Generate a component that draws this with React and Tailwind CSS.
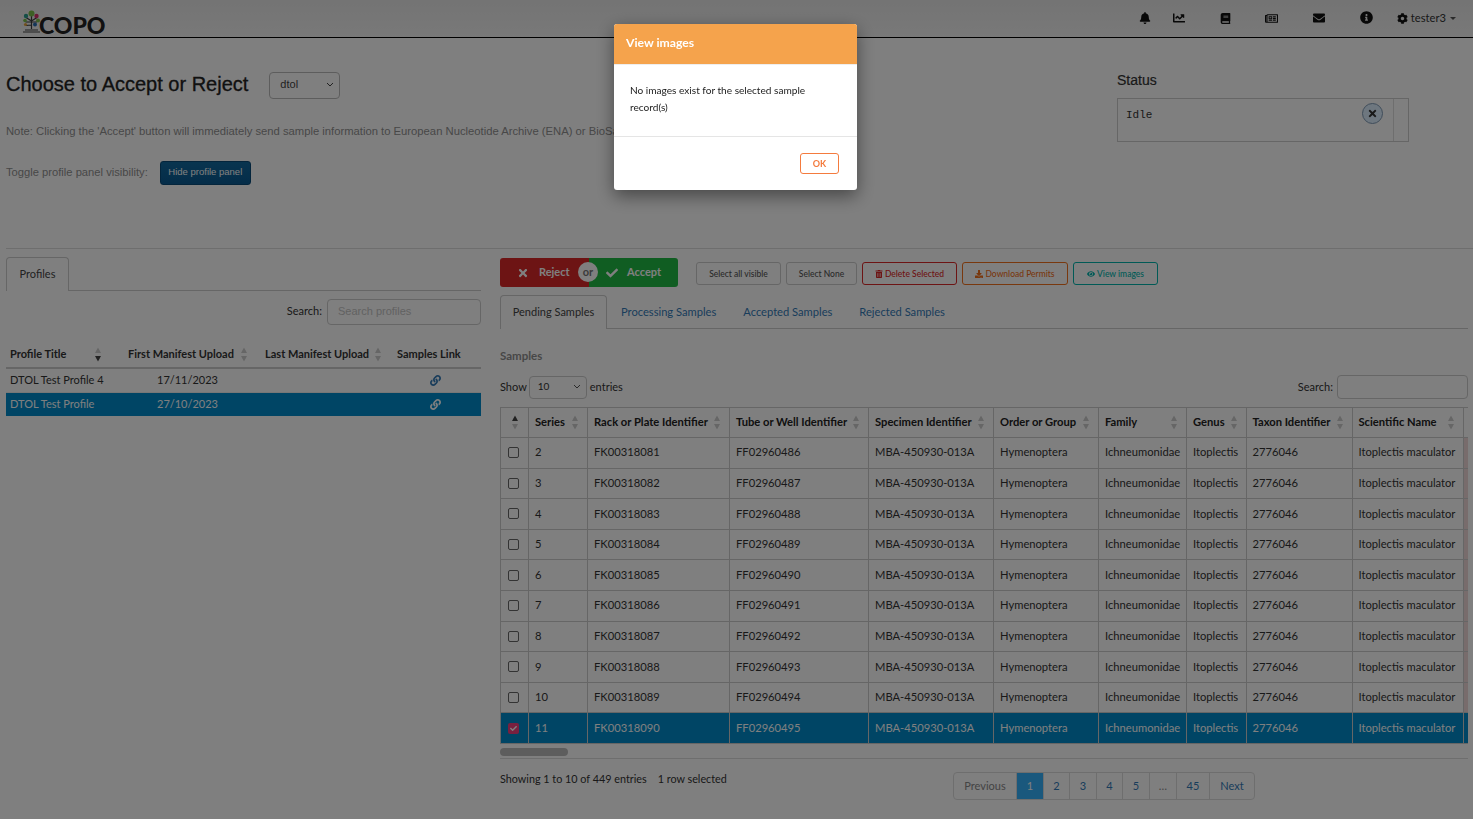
import {
  FaBell,
  FaChartLine,
  FaBook,
  FaRegNewspaper,
  FaEnvelope,
  FaInfoCircle,
  FaCog,
  FaLink,
  FaTimes,
  FaCheck,
  FaTrashAlt,
  FaDownload,
  FaEye,
} from "react-icons/fa";

const lato = "font-['Lato','Liberation_Sans',sans-serif]";

const sampleCols = [
  { label: "Series", w: 59, key: "series" },
  { label: "Rack or Plate Identifier", w: 142, key: "rack" },
  { label: "Tube or Well Identifier", w: 139, key: "tube" },
  { label: "Specimen Identifier", w: 125, key: "spec" },
  { label: "Order or Group", w: 105, key: "order" },
  { label: "Family", w: 88, key: "family" },
  { label: "Genus", w: 59.5, key: "genus" },
  { label: "Taxon Identifier", w: 106, key: "taxon" },
  { label: "Scientific Name", w: 111, key: "name" },
];

const rows = Array.from({ length: 10 }, (_, i) => ({
  series: i + 2,
  rack: `FK0031${8081 + i}`,
  tube: `FF0${2960486 + i}`,
  spec: "MBA-450930-013A",
  order: "Hymenoptera",
  family: "Ichneumonidae",
  genus: "Itoplectis",
  taxon: "2776046",
  name: "Itoplectis maculator",
  selected: i === 9,
}));

function SortArrows({ active }) {
  return (
    <svg width="8" height="15" viewBox="0 0 8 15" className="shrink-0">
      <path d="M4 0.5 L7 6 L1 6 Z" fill={active === "up" ? "#444" : "#ccc"} />
      <path d="M4 14.5 L7 9 L1 9 Z" fill={active === "down" ? "#444" : "#ccc"} />
    </svg>
  );
}

function Logo() {
  return (
    <div className="flex items-end ml-[22px] mb-[1px]">
      <svg width="19" height="23" viewBox="0 0 19 23" className="mb-[3px]">
        <path d="M9.5 5 V19 M4 7.5 L9.5 11 M15 7.5 L9.5 11 M3.5 12 H15 M4 15.5 L9.5 15" stroke="#3d3d3d" strokeWidth="1.2" fill="none" />
        <path d="M1 22 H18 M3 20 H16" stroke="#444" strokeWidth="1" />
        <circle cx="9.5" cy="3.5" r="3" fill="#7cc04a" />
        <circle cx="4" cy="6" r="2.2" fill="#2a9d8f" />
        <circle cx="14.5" cy="6" r="2.2" fill="#d6336c" />
        <circle cx="3" cy="10.5" r="1.8" fill="#7cc04a" />
        <circle cx="16" cy="10.5" r="2" fill="#7cc04a" />
        <circle cx="3.5" cy="14.5" r="1.6" fill="#e0a03c" />
        <circle cx="13" cy="14.5" r="2" fill="#2b6cb0" />
      </svg>
      <span className={`${lato} -ml-[2px] text-[23px] leading-[22px] font-black text-[#222]`}>COPO</span>
    </div>
  );
}

function Navbar() {
  return (
    <nav className="h-[38px] flex items-end justify-between border-b border-black bg-gradient-to-b from-[#e8e8e8] to-[#f2f2f2]">
      <Logo />
      <div className="flex items-center h-[37px] pr-[17px] pb-[1px] text-[#111] text-[12px]">
        <FaBell className="text-[12px]" />
        <FaChartLine className="text-[12px] ml-[22px]" />
        <FaBook className="text-[11px] ml-[35px]" />
        <FaRegNewspaper className="text-[13px] ml-[34px]" />
        <FaEnvelope className="text-[12px] ml-[35px]" />
        <FaInfoCircle className="text-[13px] ml-[35px] mb-[2px]" />
        <FaCog className="text-[11px] ml-[24px]" />
        <span className={`${lato} text-[#333] text-[11.2px] ml-[3px]`}>tester3</span>
        <span className="ml-[4px] border-x-[3px] border-t-[3px] border-x-transparent border-t-[#555]" />
      </div>
    </nav>
  );
}

function TopPanel() {
  return (
    <section className="h-[211px] ml-[6px] border-b border-[#ddd] flex font-['Liberation_Sans',sans-serif]">
      <div className="flex-1 min-w-0 pt-[34px]">
        <div className="flex items-center h-[27px]">
          <h1 className="mb-[4px] text-[20px] font-medium text-[#222] [-webkit-text-stroke:0.3px_#222]">Choose to Accept or Reject</h1>
          <div className="ml-[21px] w-[71px] h-[27px] border border-[#bbb] rounded-[4px] flex items-center justify-between pl-[10px] pr-[5px] pb-[2px] text-[11px] text-[#444]">
            dtol
            <svg width="8" height="5" viewBox="0 0 8 5"><path d="M1 1 L4 4 L7 1" stroke="#444" fill="none" /></svg>
          </div>
        </div>
        <p className="mt-[23px] text-[11.25px] leading-[18px] text-[#909090] whitespace-nowrap">
          Note: Clicking the 'Accept' button will immediately send sample information to European Nucleotide Archive (ENA) or BioSamples.
        </p>
        <div className="mt-[21px] flex items-center h-[24px]">
          <span className="text-[11.2px] pb-[2px] text-[#909090]">Toggle profile panel visibility:</span>
          <button className="ml-[12px] w-[91px] h-[24px] pb-[2px] rounded-[3px] bg-gradient-to-b from-[#11699f] to-[#0a5a92] border border-[#084a78] text-white text-[9.5px]">
            Hide profile panel
          </button>
        </div>
      </div>
      <div className="w-[292px] mr-[64px] pt-[34px]">
        <h2 className="text-[14px] leading-[16px] font-medium text-[#333] [-webkit-text-stroke:0.2px_#333]">Status</h2>
        <div className="mt-[10px] h-[44px] border border-[#ccc] flex font-['Liberation_Mono',monospace]">
          <div className="flex-1 relative pl-[8px] pt-[10px] text-[11px] leading-[13px] text-[#333]">
            Idle
            <span className="absolute right-[10px] top-[4px] w-[21px] h-[21px] rounded-full border border-[#7f9ab4] bg-[#dceeff] flex items-center justify-center text-[#333]">
              <FaTimes className="text-[11px]" />
            </span>
          </div>
          <div className="w-[15px] border-l border-[#ddd]" />
        </div>
      </div>
    </section>
  );
}

function ProfilesPanel() {
  const heads = [
    { label: "Profile Title", w: 118, arrow: "down", pad: "pl-[4px] pr-[22px]" },
    { label: "First Manifest Upload", w: 137, pad: "pl-[4px] pr-[13px]" },
    { label: "Last Manifest Upload", w: 132, pad: "pl-[4px] pr-[11px]" },
    { label: "Samples Link", w: 88, pad: "pl-[4px]", noSort: true },
  ];
  const profiles = [
    { title: "DTOL Test Profile 4", date: "17/11/2023" },
    { title: "DTOL Test Profile", date: "27/10/2023", selected: true },
  ];
  return (
    <div className={`w-[475px] shrink-0 pt-[8px] ${lato} text-[11px] text-[#333]`}>
      <div className="h-[34px] border-b border-[#ccc]">
        <div className="w-[63px] h-[34px] pb-[1px] border border-b-0 border-[#ccc] rounded-t-[4px] bg-[#fff] flex items-center justify-center text-[#444]">
          Profiles
        </div>
      </div>
      <div className="mt-[8px] h-[26px] flex items-center justify-end">
        <span className="pb-[2px]">Search:</span>
        <div className="ml-[5px] w-[154px] h-[26px] pb-[2px] border border-[#ccc] rounded-[4px] pl-[10px] flex items-center text-[#c4c4c4] font-['Liberation_Sans',sans-serif] text-[11px]">
          Search profiles
        </div>
      </div>
      <table className="mt-[17px] w-[475px] table-fixed border-collapse">
        <colgroup>
          {heads.map((h) => (
            <col key={h.label} style={{ width: h.w }} />
          ))}
        </colgroup>
        <thead>
          <tr className="h-[26px] border-b-2 border-[#ccc]">
            {heads.map((h) => (
              <th key={h.label} className={`${h.pad} p-0 text-left font-bold whitespace-nowrap`}>
                <div className="flex items-center justify-between">
                  {h.label}
                  {!h.noSort && <SortArrows active={h.arrow} />}
                </div>
              </th>
            ))}
          </tr>
        </thead>
        <tbody>
          {profiles.map((p) => (
            <tr key={p.title} className={`h-[24px] ${p.selected ? "bg-[#008bcb] text-white" : "border-b border-[#eee]"}`}>
              <td className="pl-[4px]">{p.title}</td>
              <td className="pl-[33px]">{p.date}</td>
              <td />
              <td className="pl-[37px]">
                <FaLink className={`text-[11px] ${p.selected ? "text-white" : "text-[#337ab7]"}`} />
              </td>
            </tr>
          ))}
        </tbody>
      </table>
    </div>
  );
}

function ActionButtons() {
  const small = "h-[23px] pt-[1px] rounded-[3px] border flex items-center justify-center text-[8.5px] font-medium";
  return (
    <div className="h-[29px] flex items-center">
      <div className="relative flex w-[178px] h-[29px] pt-0 text-white text-[11px] font-bold">
        <div className="w-[89px] bg-[#db2828] rounded-l-[3px] flex items-center pl-[17px]">
          <FaTimes className="text-[12px]" />
          <span className="ml-[10px]">Reject</span>
        </div>
        <div className="w-[89px] bg-[#21ba45] rounded-r-[3px] flex items-center pl-[17px]">
          <FaCheck className="text-[12px]" />
          <span className="ml-[9px]">Accept</span>
        </div>
        <span className="absolute left-[78px] top-[4px] w-[20px] h-[20px] rounded-full bg-white text-[#777] flex items-center justify-center text-[11px]">or</span>
      </div>
      <div className="ml-[18px] mt-[2px] flex gap-[5px]">
        <div className={`${small} w-[85px] border-[#ccc] text-[#555]`}>Select all visible</div>
        <div className={`${small} w-[71px] border-[#ccc] text-[#555]`}>Select None</div>
        <div className={`${small} w-[95px] border-[#db2828] text-[#db2828]`}>
          <FaTrashAlt className="text-[8px] mr-[2px]" />Delete Selected
        </div>
        <div className={`${small} w-[106px] border-[#f2711c] text-[#f2711c]`}>
          <FaDownload className="text-[8px] mr-[2px]" />Download Permits
        </div>
        <div className={`${small} w-[85px] border-[#00b5ad] text-[#00b5ad]`}>
          <FaEye className="text-[8px] mr-[2px]" />View images
        </div>
      </div>
    </div>
  );
}

function SampleTabs() {
  return (
    <div className="mt-[8px] h-[34px] border-b border-[#ccc] flex text-[11.15px]">
      <div className="w-[107px] h-[34px] pb-[1px] border border-b-0 border-[#ccc] rounded-t-[4px] bg-white flex items-center justify-center text-[11px] text-[#444]">
        Pending Samples
      </div>
      <span className="ml-[14px] mt-[9px] text-[#337ab7]">Processing Samples</span>
      <span className="ml-[27px] mt-[9px] text-[#337ab7]">Accepted Samples</span>
      <span className="ml-[27px] mt-[9px] text-[#337ab7]">Rejected Samples</span>
    </div>
  );
}

function Checkbox({ checked }) {
  return checked ? (
    <span className="block w-[11px] h-[11px] ml-[7px] rounded-[2px] bg-[#f0407f] flex items-center justify-center text-white">
      <FaCheck className="text-[7px]" />
    </span>
  ) : (
    <span className="block w-[11px] h-[11px] ml-[7px] rounded-[2px] border border-[#666] bg-[#fff]" />
  );
}

function SamplesTable() {
  return (
    <div className="mt-[8px] overflow-hidden w-[968px]">
      <table className="table-fixed border-collapse w-[975px] border-l border-[#ccc]">
        <colgroup>
          <col style={{ width: 28 }} />
          {sampleCols.map((c) => (
            <col key={c.key} style={{ width: c.w }} />
          ))}
          <col style={{ width: 12 }} />
        </colgroup>
        <thead>
          <tr className="h-[30px] border-y border-[#ccc] text-[#222]">
            <th className="border-r border-[#ccc]">
              <div className="flex justify-center">
                <SortArrows active="up" />
              </div>
            </th>
            {sampleCols.map((c) => (
              <th key={c.key} className="border-r border-[#ccc] pl-[6px] pr-[8px] text-left font-bold whitespace-nowrap">
                <div className="flex items-center justify-between">
                  {c.label}
                  <SortArrows />
                </div>
              </th>
            ))}
            <th />
          </tr>
        </thead>
        <tbody>
          {rows.map((r) => (
            <tr key={r.series} className={`h-[30.6px] border-b border-[#ccc] ${r.selected ? "bg-[#008bcb] text-white" : ""}`}>
              <td className="border-r border-[#ccc]">
                <Checkbox checked={r.selected} />
              </td>
              {sampleCols.map((c) => (
                <td key={c.key} className="border-r border-[#ccc] pl-[6px] whitespace-nowrap">
                  {r[c.key]}
                </td>
              ))}
              <td className={r.selected ? "" : "bg-[#f0d8d8]"} />
            </tr>
          ))}
        </tbody>
      </table>
    </div>
  );
}

function Pagination() {
  const pages = [
    { t: "Previous", w: 62, cls: "text-[#888]" },
    { t: "1", w: 27, cls: "bg-[#34b0fa] text-white" },
    { t: "2", w: 26 },
    { t: "3", w: 27 },
    { t: "4", w: 26 },
    { t: "5", w: 27 },
    { t: "…", w: 27, cls: "text-[#888]" },
    { t: "45", w: 33 },
    { t: "Next", w: 45 },
  ];
  return (
    <div className="flex h-[28px] border border-[#ddd] rounded-[4px] overflow-hidden text-[11px]">
      {pages.map((p, i) => (
        <div
          key={p.t}
          style={{ width: p.w }}
          className={`flex items-center justify-center ${i > 0 ? "border-l border-[#ddd]" : ""} ${p.cls ?? "text-[#337ab7]"}`}
        >
          {p.t}
        </div>
      ))}
    </div>
  );
}

function SamplesPanel() {
  return (
    <div className={`w-[968px] shrink-0 pt-[9px] ${lato} text-[11.2px] text-[#333]`}>
      <ActionButtons />
      <SampleTabs />
      <h3 className="mt-[19px] text-[11.5px] leading-[16px] font-bold text-[#8f8f8f]">Samples</h3>
      <div className="mt-[11px] h-[24px] flex items-center text-[11px]">
        <span>Show</span>
        <div className="ml-[2px] w-[58px] h-[23px] pb-[1px] border border-[#ccc] rounded-[4px] flex items-center justify-between pl-[8px] pr-[5px] text-[10px]">
          10
          <svg width="8" height="5" viewBox="0 0 8 5"><path d="M1 1 L4 4 L7 1" stroke="#555" fill="none" /></svg>
        </div>
        <span className="ml-[3px]">entries</span>
        <span className="ml-auto">Search:</span>
        <div className="ml-[4px] w-[131px] h-[24px] border border-[#ccc] rounded-[4px]" />
      </div>
      <SamplesTable />
      <div className="mt-[4px] h-[11px] border-b border-[#ddd]">
        <div className="w-[68px] h-[8px] rounded-full bg-[#bbb]" />
      </div>
      <div className="mt-[13px] flex items-start">
        <div className="-mt-[1px] text-[10.8px]">
          Showing 1 to 10 of 449 entries<span className="ml-[11px]">1 row selected</span>
        </div>
        <div className="ml-auto mr-[213px]">
          <Pagination />
        </div>
      </div>
    </div>
  );
}

function ImagesModal() {
  return (
    <div className="fixed inset-0 bg-black/50">
      <div className={`absolute left-[614px] top-[24px] w-[243px] h-[166px] rounded-[3px] bg-white overflow-hidden shadow-[0_6px_18px_rgba(0,0,0,0.45)] ${lato}`}>
        <div className="h-[41px] pb-[1px] bg-[#f5a34c] border-b border-[#eee] flex items-center pl-[12px] text-white text-[12.2px] font-bold">
          View images
        </div>
        <div className="h-[72px] border-b border-[#e5e5e5] px-[16px] pt-[17px] text-[10.1px] leading-[17px] text-[#222]">
          No images exist for the selected sample record(s)
        </div>
        <div className="flex justify-end pr-[18px] pt-[16px]">
          <button className="w-[39px] h-[21px] rounded-[3px] border border-[#f47b3e] text-[#f47b3e] text-[9px] font-bold">OK</button>
        </div>
      </div>
    </div>
  );
}

export default function App() {
  return (
    <div className="relative h-[819px] overflow-hidden bg-white">
      <Navbar />
      <TopPanel />
      <main className="flex gap-[19px] pl-[6px]">
        <ProfilesPanel />
        <SamplesPanel />
      </main>
      <ImagesModal />
    </div>
  );
}
